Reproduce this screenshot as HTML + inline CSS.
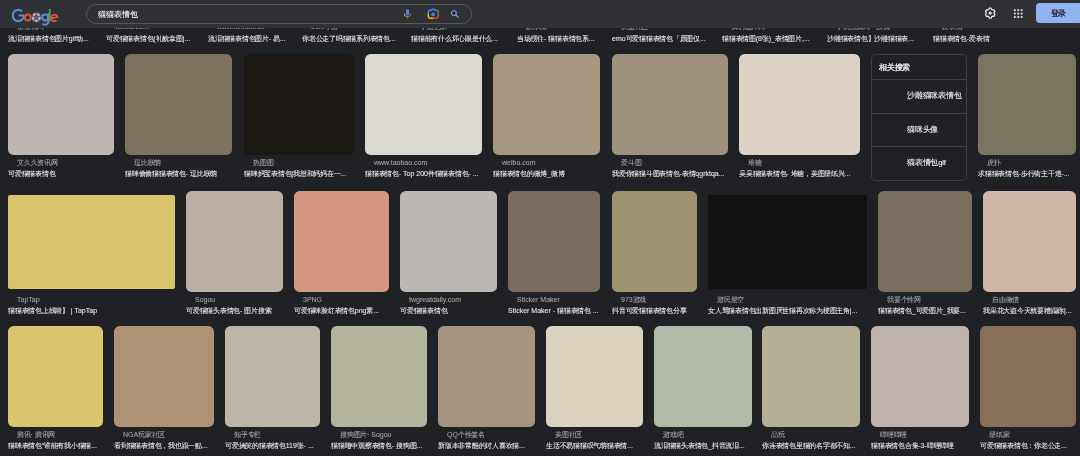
<!DOCTYPE html>
<html><head><meta charset="utf-8">
<style>
html,body{margin:0;padding:0;}
body{will-change:transform;width:1080px;height:456px;overflow:hidden;background:#202124;position:relative;font-family:"Liberation Sans",sans-serif;}
.t{position:absolute;}
.c{font-size:7.2px;letter-spacing:-0.25px;}
.s{position:absolute;font-size:7px;line-height:9px;height:9px;color:#a4a6a9;-webkit-text-stroke:0.08px #a4a6a9;white-space:nowrap;overflow:hidden;}
.ti{position:absolute;font-size:7px;line-height:9px;height:9px;color:#e8eaed;-webkit-text-stroke:0.08px #e8eaed;white-space:nowrap;overflow:hidden;}
#hdr{position:absolute;left:0;top:0;width:1080px;height:28px;background:#303134;z-index:5;}
#sb{position:absolute;left:86px;top:4px;width:384px;height:18px;border:1px solid #54575c;border-radius:10px;box-sizing:content-box;}
#q{position:absolute;left:98px;top:9.7px;font-size:7.6px;line-height:10px;color:#e8eaed;-webkit-text-stroke:0.15px #e8eaed;}
#rel{position:absolute;left:871px;top:54px;width:94px;height:125px;border:1px solid #3c4043;border-radius:5px;}
.rd{position:absolute;left:0;width:94px;height:1px;background:#3c4043;}
.ri{position:absolute;left:35.2px;font-size:7.7px;letter-spacing:-0.25px;line-height:10px;color:#e8eaed;white-space:nowrap;-webkit-text-stroke:0.12px #e8eaed;}
#login{position:absolute;left:1036px;top:3px;width:50px;height:20.4px;background:#8fb4f0;border-radius:4px;}
#login span{position:absolute;left:14.8px;top:6.2px;font-size:7.7px;letter-spacing:-0.4px;line-height:10px;color:#202124;font-weight:bold;}
</style></head><body>
<div class="s" style="left:17px;top:21.8px;width:91px"><span class="c">京致情网</span></div>
<div class="ti" style="left:8px;top:34px;width:100px"><span class="c">流泪猫猫表情包图片</span>gif<span class="c">动</span>...</div>
<div class="s" style="left:115px;top:21.8px;width:91px">weibo.com</div>
<div class="ti" style="left:106px;top:34px;width:100px"><span class="c">可爱猫猫表情包</span>(<span class="c">礼貌拿图</span>|...</div>
<div class="s" style="left:217px;top:21.8px;width:91px">www.xinhet.net</div>
<div class="ti" style="left:208px;top:34px;width:100px"><span class="c">流泪猫猫表情包图片</span>- <span class="c">易</span>...</div>
<div class="s" style="left:311px;top:21.8px;width:91px">50M<span class="c">手游</span></div>
<div class="ti" style="left:302px;top:34px;width:100px"><span class="c">你老公走了吗猫猫系列表情包</span>...</div>
<div class="s" style="left:420px;top:21.8px;width:91px"><span class="c">手游之家</span></div>
<div class="ti" style="left:411px;top:34px;width:100px"><span class="c">猫猫能有什么坏心眼是什么</span>...</div>
<div class="s" style="left:526px;top:21.8px;width:91px"><span class="c">娱乐圈</span></div>
<div class="ti" style="left:517px;top:34px;width:100px"><span class="c">当场愣住</span>- <span class="c">猫猫表情包系</span>...</div>
<div class="s" style="left:621px;top:21.8px;width:91px"><span class="c">美图社区</span></div>
<div class="ti" style="left:612px;top:34px;width:100px">emo<span class="c">可爱猫猫表情包「原图仅</span>...</div>
<div class="s" style="left:731px;top:21.8px;width:91px"><span class="c">我们图片网</span></div>
<div class="ti" style="left:722px;top:34px;width:100px"><span class="c">猫猫表情图</span>(8<span class="c">张</span>)_<span class="c">表情图片</span>,...</div>
<div class="s" style="left:836px;top:21.8px;width:91px"><span class="c">手机搜狐网</span> · <span class="c">搜狐</span></div>
<div class="ti" style="left:827px;top:34px;width:100px"><span class="c">沙雕猫表情包】沙雕猫猫表</span>...</div>
<div class="s" style="left:942px;top:21.8px;width:91px"><span class="c">爱表情</span></div>
<div class="ti" style="left:933px;top:34px;width:100px"><span class="c">猫猫表情包</span>-<span class="c">爱表情</span></div>
<div class="t" style="left:8px;top:54px;width:106px;height:101px;background:#bfb6b3;border-radius:5.6px"></div>
<div class="s" style="left:17px;top:157.5px;width:97px"><span class="c">艾久久资讯网</span></div>
<div class="ti" style="left:8px;top:169px;width:106px"><span class="c">可爱猫猫表情包</span></div>
<div class="t" style="left:125px;top:54px;width:107px;height:101px;background:#7d7160;border-radius:5.6px"></div>
<div class="s" style="left:134px;top:157.5px;width:98px"><span class="c">逗比联萌</span></div>
<div class="ti" style="left:125px;top:169px;width:107px"><span class="c">猫咪偷偷猫猫表情包</span>- <span class="c">逗比联萌</span></div>
<div class="t" style="left:244px;top:54px;width:110px;height:101px;background:#1c1914;border-radius:5.6px"></div>
<div class="s" style="left:253px;top:157.5px;width:101px"><span class="c">热图图</span></div>
<div class="ti" style="left:244px;top:169px;width:110px"><span class="c">猫咪妈宝表情包</span>|<span class="c">我想和妈妈在一</span>...</div>
<div class="t" style="left:365px;top:54px;width:117px;height:101px;background:#dcd9d3;border-radius:5.6px"></div>
<div class="s" style="left:374px;top:157.5px;width:108px">www.taobao.com</div>
<div class="ti" style="left:365px;top:169px;width:117px"><span class="c">猫猫表情包</span>- Top 200<span class="c">件猫猫表情包</span>- ...</div>
<div class="t" style="left:493px;top:54px;width:107px;height:101px;background:#a69780;border-radius:5.6px"></div>
<div class="s" style="left:502px;top:157.5px;width:98px">weibo.com</div>
<div class="ti" style="left:493px;top:169px;width:107px"><span class="c">猫猫表情包的微博</span>_<span class="c">微博</span></div>
<div class="t" style="left:612px;top:54px;width:116px;height:101px;background:#9e927e;border-radius:5.6px"></div>
<div class="s" style="left:621px;top:157.5px;width:107px"><span class="c">爱斗图</span></div>
<div class="ti" style="left:612px;top:169px;width:116px"><span class="c">我爱你猫猫斗图表情包</span>-<span class="c">表情</span>qgrktqa...</div>
<div class="t" style="left:739px;top:54px;width:121px;height:101px;background:#dcd2c5;border-radius:5.6px"></div>
<div class="s" style="left:748px;top:157.5px;width:112px"><span class="c">堆糖</span></div>
<div class="ti" style="left:739px;top:169px;width:121px"><span class="c">吴吴猫猫表情包</span>- <span class="c">堆糖，美图壁纸兴</span>...</div>
<div class="t" style="left:978px;top:54px;width:98px;height:101px;background:#7a7460;border-radius:5.6px"></div>
<div class="s" style="left:987px;top:157.5px;width:89px"><span class="c">虎扑</span></div>
<div class="ti" style="left:978px;top:169px;width:98px"><span class="c">求猫猫表情包</span>-<span class="c">步行街主干道</span>-...</div>
<div class="t" style="left:8px;top:194.5px;width:167px;height:94.5px;background:#dbc36c;border-radius:2px"></div>
<div class="s" style="left:17px;top:294.5px;width:158px">TapTap</div>
<div class="ti" style="left:8px;top:306px;width:167px"><span class="c">猫猫表情包上线啦】</span> | TapTap</div>
<div class="t" style="left:186px;top:191px;width:97px;height:101px;background:#bbb0a6;border-radius:5.6px"></div>
<div class="s" style="left:195px;top:294.5px;width:88px">Sogou</div>
<div class="ti" style="left:186px;top:306px;width:97px"><span class="c">可爱猫猫头表情包</span>- <span class="c">图片搜索</span></div>
<div class="t" style="left:294px;top:191px;width:95px;height:101px;background:#d49781;border-radius:5.6px"></div>
<div class="s" style="left:303px;top:294.5px;width:86px">3PNG</div>
<div class="ti" style="left:294px;top:306px;width:95px"><span class="c">可爱猫咪脸红表情包</span>png<span class="c">素</span>...</div>
<div class="t" style="left:400px;top:191px;width:97px;height:101px;background:#bbb7b5;border-radius:5.6px"></div>
<div class="s" style="left:409px;top:294.5px;width:88px">twgreatdaily.com</div>
<div class="ti" style="left:400px;top:306px;width:97px"><span class="c">可爱猫猫表情包</span></div>
<div class="t" style="left:508px;top:191px;width:92px;height:101px;background:#7a6c5e;border-radius:5.6px"></div>
<div class="s" style="left:517px;top:294.5px;width:83px">Sticker Maker</div>
<div class="ti" style="left:508px;top:306px;width:92px">Sticker Maker - <span class="c">猫猫表情包</span> ...</div>
<div class="t" style="left:612px;top:191px;width:85px;height:101px;background:#9e936f;border-radius:5.6px"></div>
<div class="s" style="left:621px;top:294.5px;width:76px">973<span class="c">游戏</span></div>
<div class="ti" style="left:612px;top:306px;width:85px"><span class="c">抖音可爱猫猫表情包分享</span></div>
<div class="t" style="left:708px;top:194.5px;width:159px;height:94.5px;background:#111111;border-radius:2px"></div>
<div class="s" style="left:717px;top:294.5px;width:150px"><span class="c">游民星空</span></div>
<div class="ti" style="left:708px;top:306px;width:159px"><span class="c">女人骂猫表情包出新图厌世猫再次称为梗图主角</span>|...</div>
<div class="t" style="left:878px;top:191px;width:94px;height:101px;background:#7a6e5f;border-radius:5.6px"></div>
<div class="s" style="left:887px;top:294.5px;width:85px"><span class="c">我要个性网</span></div>
<div class="ti" style="left:878px;top:306px;width:94px"><span class="c">猫猫表情包</span>_<span class="c">可爱图片</span>_<span class="c">我要</span>...</div>
<div class="t" style="left:983px;top:191px;width:93px;height:101px;background:#d3b6aa;border-radius:5.6px"></div>
<div class="s" style="left:992px;top:294.5px;width:84px"><span class="c">自由微信</span></div>
<div class="ti" style="left:983px;top:306px;width:93px"><span class="c">我采花大盗今天就要糟蹋你</span>|...</div>
<div class="t" style="left:8px;top:326px;width:95px;height:101px;background:#dcc56f;border-radius:5.6px"></div>
<div class="s" style="left:17px;top:429.5px;width:86px"><span class="c">腾讯</span>· <span class="c">腾讯网</span></div>
<div class="ti" style="left:8px;top:441px;width:95px"><span class="c">猫咪表情包“谁能有我小猫猫</span>...</div>
<div class="t" style="left:114px;top:326px;width:100px;height:101px;background:#b09375;border-radius:5.6px"></div>
<div class="s" style="left:123px;top:429.5px;width:91px">NGA<span class="c">玩家社区</span></div>
<div class="ti" style="left:114px;top:441px;width:100px"><span class="c">看到猫猫表情包，我也跟一點</span>...</div>
<div class="t" style="left:225px;top:326px;width:95px;height:101px;background:#bdb5a8;border-radius:5.6px"></div>
<div class="s" style="left:234px;top:429.5px;width:86px"><span class="c">知乎专栏</span></div>
<div class="ti" style="left:225px;top:441px;width:95px"><span class="c">可爱搞笑的猫表情包</span>119<span class="c">张</span>- ...</div>
<div class="t" style="left:331px;top:326px;width:96px;height:101px;background:#b5b49e;border-radius:5.6px"></div>
<div class="s" style="left:340px;top:429.5px;width:87px"><span class="c">搜狗图片</span>· Sogou</div>
<div class="ti" style="left:331px;top:441px;width:96px"><span class="c">猫猫暗中观察表情包</span>- <span class="c">搜狗图</span>...</div>
<div class="t" style="left:438px;top:326px;width:97px;height:101px;background:#a49480;border-radius:5.6px"></div>
<div class="s" style="left:447px;top:429.5px;width:88px">QQ<span class="c">个性签名</span></div>
<div class="ti" style="left:438px;top:441px;width:97px"><span class="c">新版本非常酷的讨人喜欢猫</span>...</div>
<div class="t" style="left:546px;top:326px;width:97px;height:101px;background:#dbd3bf;border-radius:5.6px"></div>
<div class="s" style="left:555px;top:429.5px;width:88px"><span class="c">美图社区</span></div>
<div class="ti" style="left:546px;top:441px;width:97px"><span class="c">生活不易猫猫叹气萌猫表情</span>...</div>
<div class="t" style="left:654px;top:326px;width:98px;height:101px;background:#b1b9a9;border-radius:5.6px"></div>
<div class="s" style="left:663px;top:429.5px;width:89px"><span class="c">游戏吧</span></div>
<div class="ti" style="left:654px;top:441px;width:98px"><span class="c">流泪猫猫头表情包</span>_<span class="c">抖音流泪</span>...</div>
<div class="t" style="left:762px;top:326px;width:98px;height:101px;background:#b5af96;border-radius:5.6px"></div>
<div class="s" style="left:771px;top:429.5px;width:89px"><span class="c">品玩</span></div>
<div class="ti" style="left:762px;top:441px;width:98px"><span class="c">你连表情包里猫的名字都不知</span>...</div>
<div class="t" style="left:871px;top:326px;width:98px;height:101px;background:#bdb2ad;border-radius:5.6px"></div>
<div class="s" style="left:880px;top:429.5px;width:89px"><span class="c">哔哩哔哩</span></div>
<div class="ti" style="left:871px;top:441px;width:98px"><span class="c">猫猫表情包合集</span>-3-<span class="c">哔哩哔哩</span></div>
<div class="t" style="left:980px;top:326px;width:96px;height:101px;background:#876f58;border-radius:5.6px"></div>
<div class="s" style="left:989px;top:429.5px;width:87px"><span class="c">壁纸家</span></div>
<div class="ti" style="left:980px;top:441px;width:96px"><span class="c">可爱猫猫表情包：你老公走</span>...</div>
<div id="rel">
  <div class="ri" style="left:7px;top:8px;-webkit-text-stroke:0.3px #e8eaed">相关搜索</div>
  <div class="rd" style="top:24px"></div>
  <div class="ri" style="top:36px">沙雕猫咪表情包</div>
  <div class="rd" style="top:58px"></div>
  <div class="ri" style="top:70px">猫咪头像</div>
  <div class="rd" style="top:91px"></div>
  <div class="ri" style="top:103px">猫表情包gif</div>
</div>
<div id="hdr">
  <svg style="position:absolute;left:0;top:0" width="1080" height="28" viewBox="0 0 1080 28">
    <!-- Google logo -->
    <path d="M22.2 11.5 A5.6 5.6 0 1 0 23.9 15.4" fill="none" stroke="#5a8ad8" stroke-width="2.1"/>
    <path d="M18.5 15.4 H24.0" fill="none" stroke="#5a8ad8" stroke-width="2.0"/>
    <circle cx="27.8" cy="17.6" r="3.0" fill="none" stroke="#e0523e" stroke-width="2"/>
    <circle cx="36.3" cy="17.4" r="5.2" fill="#4e59b8"/>
    <ellipse cx="34.30" cy="14.65" rx="1.6" ry="1.05" transform="rotate(-36 34.30 14.65)" fill="#f2c431"/><ellipse cx="38.30" cy="14.65" rx="1.6" ry="1.05" transform="rotate(36 38.30 14.65)" fill="#f2c431"/><ellipse cx="39.53" cy="18.45" rx="1.6" ry="1.05" transform="rotate(108 39.53 18.45)" fill="#f2c431"/><ellipse cx="36.30" cy="20.80" rx="1.6" ry="1.05" transform="rotate(180 36.30 20.80)" fill="#f2c431"/><ellipse cx="33.07" cy="18.45" rx="1.6" ry="1.05" transform="rotate(252 33.07 18.45)" fill="#f2c431"/>
    <circle cx="45.2" cy="17.4" r="3.0" fill="none" stroke="#5a8ad8" stroke-width="2"/>
    <path d="M48.3 13.2 V21.9 A3.3 2.7 0 0 1 42.3 23.5" fill="none" stroke="#5a8ad8" stroke-width="1.9"/>
    <rect x="48.8" y="8.9" width="1.8" height="12.7" fill="#52a64f"/>
    <path d="M52.0 18.3 L57.4 16.8 A3.2 3.3 0 1 0 56.6 20.3" fill="none" stroke="#e0523e" stroke-width="1.9"/>
    <!-- mic -->
    <rect x="406.1" y="9" width="3" height="6.4" rx="1.5" fill="#4285f4"/>
    <path d="M404.3 13.6 A3.2 3.1 0 0 0 407.6 16.7" fill="none" stroke="#f4b400" stroke-width="1"/>
    <path d="M407.6 16.7 A3.2 3.1 0 0 0 410.9 13.6" fill="none" stroke="#ea4335" stroke-width="1"/>
    <path d="M407.6 16.6 V18.8" fill="none" stroke="#34a853" stroke-width="1"/>
    <!-- lens -->
    <path d="M428.3 13.4 V12.2 A2 2 0 0 1 430.3 10.2 H431.6 L432.2 9.2 H434.2 L434.8 10.2 H436.3" fill="none" stroke="#4285f4" stroke-width="1.4"/>
    <path d="M436.3 10.2 A2 2 0 0 1 438.3 12.2 V12.9" fill="none" stroke="#34a853" stroke-width="1.4"/>
    <path d="M438.3 12.9 V16.2 A2 2 0 0 1 436.3 18.2 H433" fill="none" stroke="#ea4335" stroke-width="1.4"/>
    <path d="M433 18.2 H430.3 A2 2 0 0 1 428.3 16.2 V13.4" fill="none" stroke="#fbbc04" stroke-width="1.4"/>
    <circle cx="433.2" cy="14.4" r="1.8" fill="#4285f4"/>
    <!-- search -->
    <circle cx="453.9" cy="13.1" r="2.5" fill="none" stroke="#8ab4f8" stroke-width="1.0"/>
    <path d="M455.7 14.9 L458.5 17.7" fill="none" stroke="#8ab4f8" stroke-width="1.1"/>
    <!-- gear -->
    <g transform="translate(990.2 13.1)">
      <path d="M-1.57 -3.52 L-0.95 -4.91 L0.95 -4.91 L1.57 -3.52 L2.26 -3.11 L3.77 -3.28 L4.73 -1.63 L3.83 -0.40 L3.83 0.40 L4.73 1.63 L3.77 3.28 L2.26 3.11 L1.57 3.52 L0.95 4.91 L-0.95 4.91 L-1.57 3.52 L-2.26 3.11 L-3.77 3.28 L-4.73 1.63 L-3.83 0.40 L-3.83 -0.40 L-4.73 -1.63 L-3.77 -3.28 L-2.26 -3.11 Z" fill="none" stroke="#e8eaed" stroke-width="1.25" stroke-linejoin="round"/>
      <circle cx="0" cy="0" r="1.55" fill="#e8eaed"/>
    </g>
    <!-- apps -->
    <rect x="1013.9" y="9.3" width="1.8" height="1.8" fill="#e8eaed"/><rect x="1013.9" y="12.7" width="1.8" height="1.8" fill="#e8eaed"/><rect x="1013.9" y="16.1" width="1.8" height="1.8" fill="#e8eaed"/><rect x="1017.3" y="9.3" width="1.8" height="1.8" fill="#e8eaed"/><rect x="1017.3" y="12.7" width="1.8" height="1.8" fill="#e8eaed"/><rect x="1017.3" y="16.1" width="1.8" height="1.8" fill="#e8eaed"/><rect x="1020.7" y="9.3" width="1.8" height="1.8" fill="#e8eaed"/><rect x="1020.7" y="12.7" width="1.8" height="1.8" fill="#e8eaed"/><rect x="1020.7" y="16.1" width="1.8" height="1.8" fill="#e8eaed"/>
  </svg>
  <div id="sb"></div>
  <div id="q">猫猫表情包</div>
  <div id="login"><span>登录</span></div>
</div>
</body></html>
